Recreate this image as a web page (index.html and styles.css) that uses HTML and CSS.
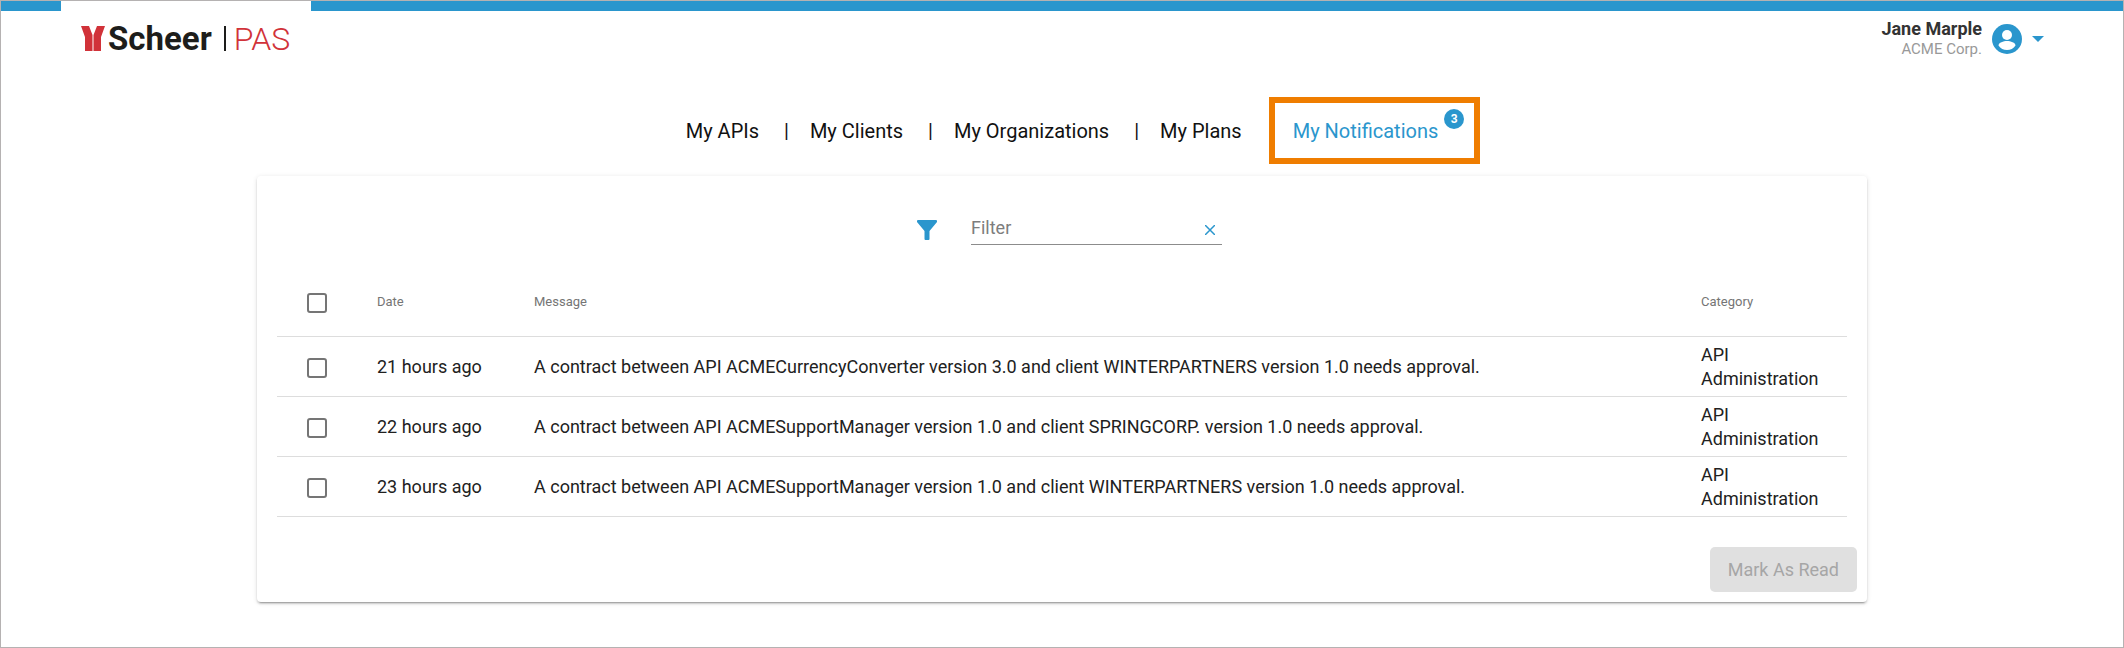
FILE: index.html
```html
<!DOCTYPE html>
<html lang="en">

<head>
    <meta charset="UTF-8">
    <meta name="viewport" content="width=device-width, initial-scale=1.0">
    <title>My Notifications</title>
    <link rel="stylesheet" href="styles.css">
</head>

<body>

    <header class="header">
        <a class="logo" href="#">
            <svg class="logo-mark" viewBox="0 0 24 25" aria-hidden="true">
                <path fill="#d13239" d="M0 0h8l3.500 9v16H4V11zM24 0h-8l-3.500 9v16H20V11z" />
            </svg>
            <span class="logo-name">Scheer</span>
            <span class="logo-divider"></span>
            <span class="logo-product">PAS</span>
        </a>
        <button class="user" type="button">
            <span class="user-text">
                <span class="user-name">Jane Marple</span>
                <span class="user-org">ACME Corp.</span>
            </span>
            <svg class="user-avatar" viewBox="0 0 30 30" aria-hidden="true">
                <circle cx="15" cy="15" r="15" fill="#2a96cd" />
                <circle cx="15" cy="11" r="5" fill="#fff" />
                <path fill="#fff" d="M6.500 21.500c0-3 5-4.500 8.500-4.500s8.500 1.500 8.500 4.500c-2 3-5 4.500-8.500 4.500s-6.500-1.500-8.500-4.500z" />
            </svg>
            <svg class="user-caret" viewBox="0 0 12 6" aria-hidden="true">
                <path fill="#2a96cd" d="M0 0h12L6 6z" />
            </svg>
        </button>
    </header>

    <nav class="tabs">
        <a href="#">My APIs</a>
        <span class="separator">|</span>
        <a href="#">My Clients</a>
        <span class="separator">|</span>
        <a href="#">My Organizations</a>
        <span class="separator">|</span>
        <a href="#">My Plans</a>
        <a class="active" href="#">My Notifications<span class="badge">3</span></a>
    </nav>

    <main class="card">
        <div class="filter">
            <svg class="filter-icon" viewBox="0 0 20 20" aria-hidden="true">
                <path fill="#2a96cd" d="M1 0h18q1 0 1 1v1l-7.500 9v8q0 1-1 1h-3q-1 0-1-1v-8L0 2V1q0-1 1-1z" />
            </svg>
            <div class="filter-field">
                <input type="text" placeholder="Filter" aria-label="Filter">
                <button class="clear" type="button" aria-label="Clear filter">
                    <svg viewBox="0 0 10 10" aria-hidden="true">
                        <path stroke="#2a96cd" stroke-width="1.500" d="M0 0l10 10M10 0L0 10" />
                    </svg>
                </button>
            </div>
        </div>

        <table class="notifications">
            <thead>
                <tr>
                    <th class="col-select"><input type="checkbox" aria-label="Select all"></th>
                    <th class="col-date">Date</th>
                    <th>Message</th>
                    <th class="col-category">Category</th>
                </tr>
            </thead>
            <tbody>
                <tr>
                    <td><input type="checkbox" aria-label="Select notification 1"></td>
                    <td>21 hours ago</td>
                    <td>A contract between API ACMECurrencyConverter version 3.0 and client WINTERPARTNERS version 1.0 needs approval.</td>
                    <td>API Administration</td>
                </tr>
                <tr>
                    <td><input type="checkbox" aria-label="Select notification 2"></td>
                    <td>22 hours ago</td>
                    <td>A contract between API ACMESupportManager version 1.0 and client SPRINGCORP. version 1.0 needs approval.</td>
                    <td>API Administration</td>
                </tr>
                <tr>
                    <td><input type="checkbox" aria-label="Select notification 3"></td>
                    <td>23 hours ago</td>
                    <td>A contract between API ACMESupportManager version 1.0 and client WINTERPARTNERS version 1.0 needs approval.</td>
                    <td>API Administration</td>
                </tr>
            </tbody>
        </table>

        <div class="actions">
            <button class="mark-read" type="button" disabled>Mark As Read</button>
        </div>
    </main>

</body>

</html>
```
FILE: styles.css
```css
* {
    box-sizing: border-box;
}

body {
    margin: 0;
    min-height: 100vh;
    border: 1px solid #b5b2b2;
    font-family: Roboto, sans-serif;
    font-size: 18px;
    color: #212121;
    background-color: #fff;
}

a {
    color: inherit;
    text-decoration: none;
}

button {
    font: inherit;
    border: none;
    background: none;
    padding: 0;
    cursor: pointer;
}

/* header: blue strip with a white cut-out over the logo */
.header {
    display: flex;
    justify-content: space-between;
    align-items: flex-start;
    padding: 0 79px 0 60px;
    background: linear-gradient(#2a96cd, #2a96cd) top / 100% 10px no-repeat;
}

.logo {
    display: flex;
    align-items: center;
    width: 250px;
    height: 75px;
    padding: 0 0 0 20px;
    background-color: #fff;
    font-size: 33px;
    line-height: 40px;
}

.logo-mark {
    width: 24px;
    height: 25px;
    margin-right: 3px;
}

.logo-name {
    font-weight: 700;
    color: #1d1d1b;
}

.logo-divider {
    width: 2px;
    height: 25px;
    margin: 0 8px 0 12px;
    background-color: #1d1d1b;
}

.logo-product {
    font-size: 32px;
    font-weight: 300;
    color: #d13239;
}

.user {
    display: flex;
    align-items: center;
    margin-top: 18px;
    text-align: right;
}

.user-text {
    display: flex;
    flex-direction: column;
    line-height: 20px;
}

.user-name {
    font-weight: 700;
    color: #333;
}

.user-org {
    font-size: 15px;
    color: #999;
}

.user-avatar {
    width: 30px;
    height: 30px;
    margin: 0 10px;
}

.user-caret {
    width: 12px;
    height: 6px;
}

/* navigation */
.tabs {
    display: flex;
    justify-content: center;
    align-items: center;
    margin-top: 21px;
    font-size: 20px;
    line-height: 24px;
    color: #111;
}

.separator {
    margin: 0 21px 0 25px;
}

.tabs .active {
    position: relative;
    margin: 0 -42px 0 27px;
    padding: 16px 36px 15px 18px;
    border: 6px solid #ef7d00;
    color: #2a96cd;
}

.badge {
    position: absolute;
    top: 6px;
    right: 10px;
    width: 20px;
    height: 20px;
    border-radius: 50%;
    background-color: #2a96cd;
    color: #fff;
    font-size: 12px;
    font-weight: 700;
    line-height: 20px;
    text-align: center;
}

/* card */
.card {
    margin: 12px 256px 45px;
    padding: 36px 10px 10px;
    border-radius: 4px;
    box-shadow: 0 3px 1px -2px rgba(0, 0, 0, 0.2), 0 2px 2px 0 rgba(0, 0, 0, 0.14), 0 1px 5px 0 rgba(0, 0, 0, 0.12);
}

.filter {
    display: flex;
    justify-content: center;
    align-items: center;
}

.filter-icon {
    width: 20px;
    height: 20px;
    margin: 3px 34px 0 15px;
}

.filter-field {
    display: flex;
    align-items: center;
    width: 251px;
    height: 33px;
    border-bottom: 1px solid #8c8c8c;
}

.filter-field input {
    flex: 1;
    min-width: 0;
    padding: 0;
    border: none;
    outline: none;
    background: none;
    font: inherit;
    line-height: 24px;
}

.filter-field input::placeholder {
    color: #7d7d7d;
}

.clear {
    display: flex;
    padding: 11px 7px 7px;
}

.clear svg {
    width: 10px;
    height: 10px;
}

.notifications {
    width: calc(100% - 20px);
    margin: 22px 10px 30px;
    border-collapse: collapse;
    table-layout: fixed;
}

.notifications th,
.notifications td {
    height: 60px;
    padding: 2px 0 0;
    border-bottom: 1px solid #ddd;
    line-height: 24px;
    text-align: left;
}

.notifications th {
    height: 69px;
    font-size: 13px;
    font-weight: 400;
    color: #757575;
}

.col-select {
    width: 100px;
}

.col-date {
    width: 10%;
}

.col-category {
    width: 146px;
}

.notifications input {
    display: block;
    appearance: none;
    width: 20px;
    height: 20px;
    margin: 2px 0 0 30px;
    border: 2px solid #757575;
    border-radius: 3px;
}

.notifications input:checked {
    border-color: #2a96cd;
    background-color: #2a96cd;
}

.actions {
    display: flex;
    justify-content: flex-end;
}

.mark-read {
    padding: 0 18px;
    border-radius: 5px;
    background-color: #e0e0e0;
    color: #a6a6a6;
    line-height: 45px;
}
```
